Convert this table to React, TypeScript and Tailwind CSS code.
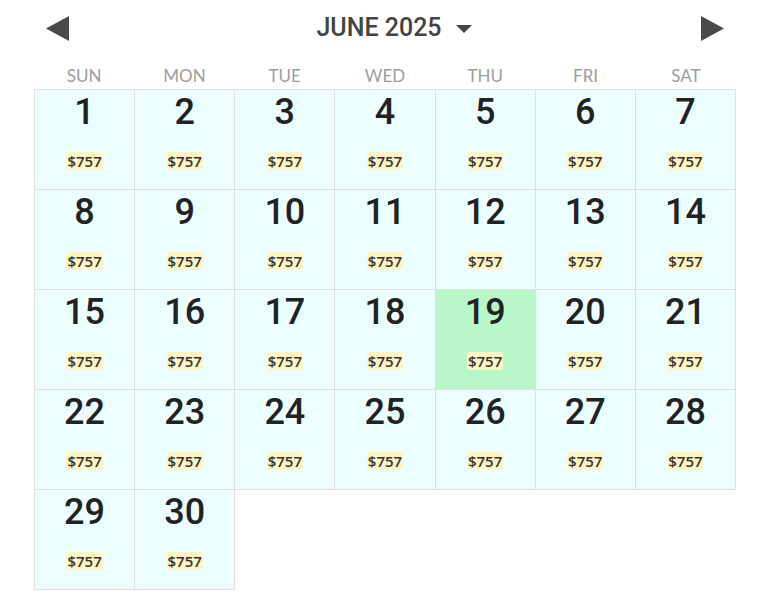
import React from 'react';

const DAY_NAMES = ['SUN', 'MON', 'TUE', 'WED', 'THU', 'FRI', 'SAT'];

// June 2025 starts on a Sunday
const days = Array.from({ length: 30 }, (_, i) => i + 1);

const Arrow: React.FC<{ dir: 'left' | 'right' }> = ({ dir }) => (
  <svg width="23" height="25" viewBox="0 0 23 25">
    {dir === 'left' ? (
      <polygon points="23,0 23,25 0,12.5" fill="#4a4a4a" />
    ) : (
      <polygon points="0,0 0,25 23,12.5" fill="#4a4a4a" />
    )}
  </svg>
);

export default function App() {
  const selected = 19;
  const price = '$757';

  return (
    <div className="w-[768px] h-[614px] bg-white flex justify-center pl-[2px]">
      <div className="w-[702px] flex flex-col">
        {/* Month header */}
        <div className="h-[56px] flex items-center px-[12px]">
          <button className="flex items-center">
            <Arrow dir="left" />
          </button>
          <div className="flex-1 flex items-center justify-center pl-[18px]">
            <span
              className="text-[25px] font-medium text-[#444]"
              style={{ fontFamily: 'Roboto, sans-serif' }}
            >
              JUNE 2025
            </span>
            <svg width="16" height="8" viewBox="0 0 16 8" className="ml-[14px] mt-[1px]">
              <polygon points="0,0 16,0 8,8" fill="#444" />
            </svg>
          </div>
          <button className="flex items-center">
            <Arrow dir="right" />
          </button>
        </div>

        {/* Weekday names */}
        <div className="grid grid-cols-7 h-[33px] items-center pt-[7px]">
          {DAY_NAMES.map((d) => (
            <div
              key={d}
              className="text-center text-[17px] text-[#9e9e9e] leading-[20px]"
              style={{ fontFamily: 'Lato, sans-serif' }}
            >
              {d}
            </div>
          ))}
        </div>

        {/* Days grid */}
        <div className="grid grid-cols-7 border-t border-l border-[#e0e0e0]">
          {days.map((n) => (
            <div
              key={n}
              className={`h-[100px] border-r border-b border-[#e0e0e0] flex flex-col items-center ${
                n === selected ? 'bg-[#b9f6ca]' : 'bg-[#ecfeff]'
              }`}
            >
              <div
                className="mt-[2px] leading-[40px] text-[36px] font-medium text-[#222]"
                style={{ fontFamily: 'Roboto, sans-serif' }}
              >
                {n}
              </div>
              <div
                className="mt-[20px] h-[18px] px-[1px] rounded-[3px] bg-[#fff4c4] text-[15px] leading-[18px] font-semibold text-[#333]"
                style={{ fontFamily: '"Open Sans", sans-serif' }}
              >
                {price}
              </div>
            </div>
          ))}
        </div>
      </div>
    </div>
  );
}
